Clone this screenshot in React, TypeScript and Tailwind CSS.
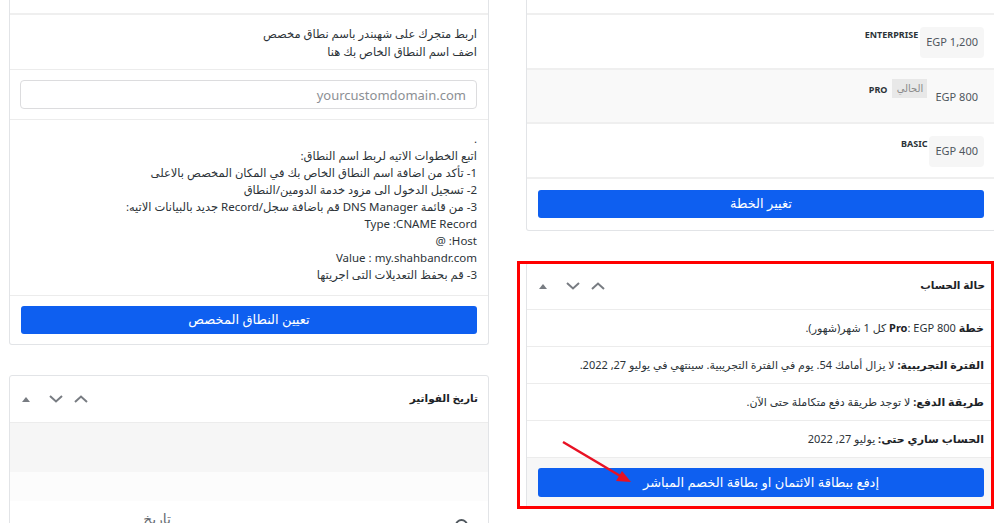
import React from "react";

const font = "font-['Noto_Sans','DejaVu_Sans',sans-serif]";

function ChevronUp() {
  return (
    <svg width="14" height="8" viewBox="0 0 14 8" fill="none">
      <polyline points="1,7 7,1.5 13,7" stroke="#787c82" strokeWidth="2" />
    </svg>
  );
}

function ChevronDown() {
  return (
    <svg width="14" height="8" viewBox="0 0 14 8" fill="none">
      <polyline points="1,1 7,6.5 13,1" stroke="#787c82" strokeWidth="2" />
    </svg>
  );
}

function Triangle() {
  return (
    <svg width="8" height="5" viewBox="0 0 8 5">
      <polygon points="0,5 4,0 8,5" fill="#787c82" />
    </svg>
  );
}

function HandleIcons() {
  return (
    <div className="flex items-center h-full">
      <div className="w-[22px] flex justify-center"><ChevronUp /></div>
      <div className="w-[28px] flex justify-center"><ChevronDown /></div>
      <div className="w-[32px] flex justify-center"><Triangle /></div>
    </div>
  );
}

function PriceBox({ price, plain }: { price: string; plain?: boolean }) {
  return (
    <div className={`h-[31px] px-[6px] flex items-center rounded-[4px] text-[11px] text-[#50575e] ${plain ? "" : "bg-[#f6f6f6]"}`}>
      <span dir="ltr">{price}</span>
    </div>
  );
}

function PlanRow({ name, price, current }: { name: string; price: string; current?: boolean }) {
  return (
    <div className={`border-b-2 border-[#efefef] pt-[12px] pr-[11px] flex items-start gap-[2px] ${current ? "bg-[#f9f9f9] h-[54px]" : "bg-white h-[55px]"}`}>
      <PriceBox price={price} plain={current} />
      {current && (
        <div className="-mt-[3px] h-[19px] w-[35px] bg-[#e8e8e8] text-[10px] text-[#8a8a8a] flex items-center justify-center">
          الحالي
        </div>
      )}
      <div className={`text-[9px] font-bold leading-[12px] mt-[2px] text-[#2c3338] ${current ? "mr-[3px]" : ""}`}>{name}</div>
    </div>
  );
}

function StatusRow({ children }: { children: React.ReactNode }) {
  return (
    <div className="h-[37px] border-b border-[#ececec] flex items-center pr-[11px] text-[11px] text-[#2c3338]">
      <p>{children}</p>
    </div>
  );
}

export default function App() {
  return (
    <div dir="rtl" className={`relative w-[994px] h-[523px] overflow-hidden bg-white ${font}`}>
      <div className="-mr-[2px] flex items-start gap-[37px]">
        {/* right column */}
        <div className="w-[470px] shrink-0">
          <div className="border-x border-b border-[#e2e4e7] rounded-b-[3px]">
            <div className="h-[15px] border-b-2 border-[#efefef]" />
            <PlanRow name="ENTERPRISE" price="EGP 1,200" />
            <PlanRow name="PRO" price="EGP 800" current />
            <PlanRow name="BASIC" price="EGP 400" />
            <div className="px-[11px] pt-[11px] pb-[12px]">
              <button className="w-full h-[28px] rounded-[3px] bg-[#0e5ff0] text-white text-[13px]">تغيير الخطة</button>
            </div>
          </div>

          <div className="mt-[31px] border border-[#e2e4e7] rounded-[3px]">
            <div className="h-[47px] border-b border-[#ececec] flex items-center justify-between">
              <h2 className="pr-[10px] text-[10.5px] font-bold text-[#1d2327]">حالة الحساب</h2>
              <HandleIcons />
            </div>
            <StatusRow>
              <b className="text-[#1d2327]">خطة</b> <b className="text-[#1d2327]">Pro</b>: EGP 800 كل 1 شهر(شهور).
            </StatusRow>
            <StatusRow>
              <b className="text-[#1d2327]">الفترة التجريبية:</b> لا يزال أمامك 54. يوم في الفترة التجريبية. سينتهي في يوليو 27, 2022.
            </StatusRow>
            <StatusRow>
              <b className="text-[#1d2327]">طريقة الدفع:</b> لا توجد طريقة دفع متكاملة حتى الآن.
            </StatusRow>
            <StatusRow>
              <b className="text-[#1d2327]">الحساب ساري حتى:</b> يوليو 27, 2022
            </StatusRow>
            <div className="bg-[#f7f7f7] px-[11px] pt-[10px] pb-[10px]">
              <button className="w-full h-[29px] rounded-[3px] bg-[#0e5ff0] text-white text-[13px]">إدفع ببطاقة الائتمان او بطاقة الخصم المباشر</button>
            </div>
          </div>
        </div>

        {/* left column */}
        <div className="w-[480px] shrink-0">
          <div className="border-x border-b border-[#e2e4e7] rounded-b-[3px]">
            <div className="h-[15px] border-b-2 border-[#efefef]" />
            <div className="pt-[10px] pb-[8px] pr-[11px] text-[11.5px] leading-[18px] text-[#2c3338] border-b border-[#ececec]">
              <p>اربط متجرك على شهبندر باسم نطاق مخصص</p>
              <p>اضف اسم النطاق الخاص بك هنا</p>
            </div>
            <div className="pt-[10px] pb-[10px] pl-[10px] pr-[11px] border-b border-[#ececec]">
              <input
                className="w-full h-[29px] rounded-[4px] border border-[#dcdcde] px-[10px] text-[13px] placeholder:text-[#8c8f94] outline-none"
                placeholder="yourcustomdomain.com"
              />
            </div>
            <div className="pt-[10px] pb-[12px] pr-[11px] text-[11.5px] leading-[17px] text-[#2c3338] border-b border-[#ececec]">
              <p>.</p>
              <p>اتبع الخطوات الاتيه لربط اسم النطاق:</p>
              <p>1- تأكد من اضافة اسم النطاق الخاص بك في المكان المخصص بالاعلى</p>
              <p>2- تسجيل الدخول الى مزود خدمة الدومين/النطاق</p>
              <p>3- من قائمة DNS Manager قم باضافة سجل/Record جديد بالبيانات الاتيه:</p>
              <p>Type :CNAME Record</p>
              <p>Host: @</p>
              <p>Value : my.shahbandr.com</p>
              <p>3- قم بحفظ التعديلات التى اجريتها</p>
            </div>
            <div className="px-[11px] py-[10px]">
              <button className="w-full h-[28px] rounded-[3px] bg-[#0e5ff0] text-white text-[13px]">تعيين النطاق المخصص</button>
            </div>
          </div>

          <div className="mt-[30px] border border-[#e2e4e7] rounded-[3px]">
            <div className="h-[47px] border-b border-[#ececec] flex items-center justify-between">
              <h2 className="pr-[10px] text-[10.5px] font-bold text-[#1d2327]">تاريخ الفواتير</h2>
              <HandleIcons />
            </div>
            <div className="h-[49px] bg-[#f6f6f6]" />
            <div className="h-[29px] bg-[#fcfcfc]" />
            <div className="h-[60px] flex items-start pt-[9px] text-[#646970]">
              <div className="w-[53px] flex justify-center pt-[9px]">
                <div className="w-[13px] h-[13px] rounded-full border-2 border-[#50575e]" />
              </div>
              <div className="w-[230px] text-left text-[10px] pt-[9px]">ـ</div>
              <div className="w-[70px] pr-[34px] text-[14px] leading-[18px] text-[#646970] whitespace-nowrap">تاريخ</div>
              <div className="w-[70px] text-left text-[10px] pt-[10px]" dir="ltr">EGP</div>
            </div>
          </div>
        </div>
      </div>

      {/* annotation */}
      <div className="absolute left-[517px] top-[261px] w-[477px] h-[248px] border-[3px] border-[#ff0000] pointer-events-none" />
      <svg className="absolute left-0 top-0 pointer-events-none" width="994" height="523">
        <line x1="563" y1="442" x2="622" y2="477" stroke="#e81123" strokeWidth="2.5" />
        <polygon points="631,482 616,481 622,471" fill="#e81123" />
      </svg>
    </div>
  );
}
